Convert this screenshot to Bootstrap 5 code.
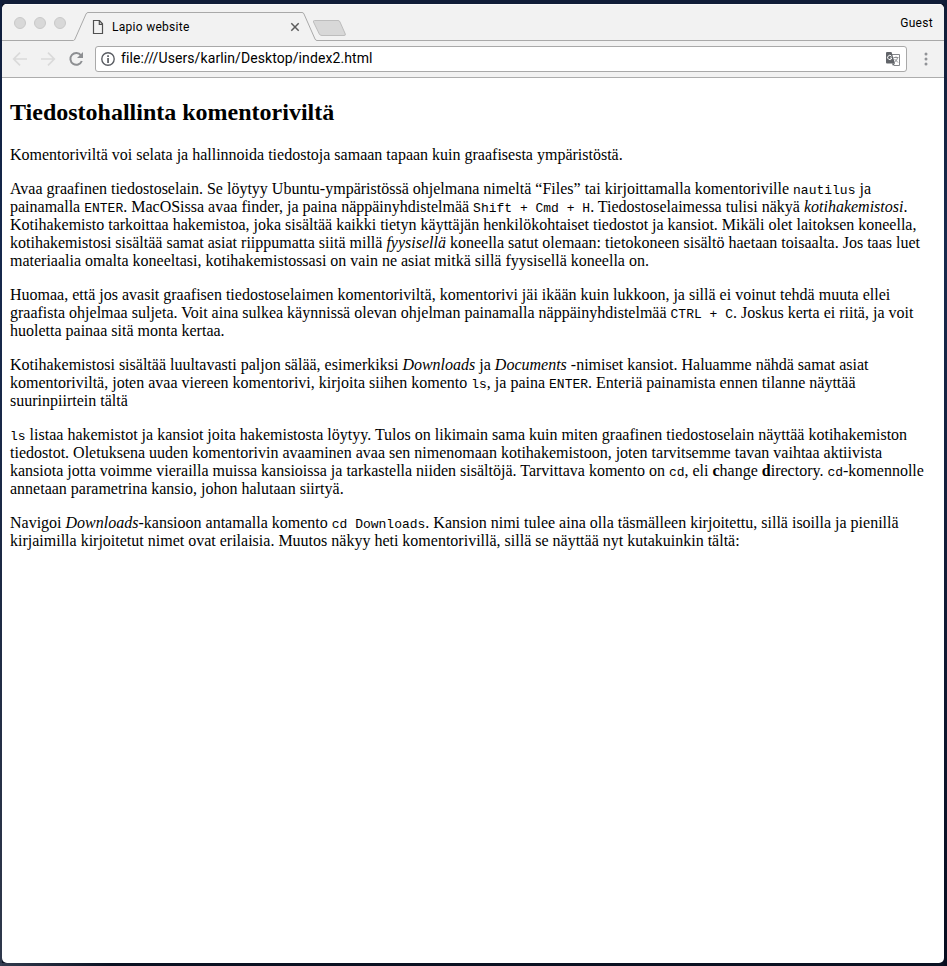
<!DOCTYPE html>
<html lang="fi">
<head>
<meta charset="utf-8">
<meta name="viewport" content="width=device-width, initial-scale=1">
<title>Lapio website</title>
<link href="https://cdn.jsdelivr.net/npm/bootstrap@5.3.0/dist/css/bootstrap.min.css" rel="stylesheet">
<style>
body{height:966px;padding:4px 3px 3px 2px;background:linear-gradient(90deg,rgba(54,63,82,.9),rgba(54,63,82,0) 110px) 0 963px/100% 3px no-repeat,linear-gradient(#0f1d3b,#15284c 25%,#1c2944 60%,#2b3448 90%,#2f394c) 0 0/2px 100% no-repeat,linear-gradient(#101c36,#182a4e 25%,#111b36 60%,#070d1f) 100% 0/3px 100% no-repeat,linear-gradient(#111d38,#111d38) 0 0/100% 4px no-repeat,#0a1122}
.browser{border-radius:5px;background:#fff}
.tabstrip{height:37px;background:#f2f2f2;box-shadow:inset 0 1px #fafafa}
.tabstrip>svg,.toolbar svg{display:block;flex:none}
.chrome-text{font-family:Roboto,"Liberation Sans",sans-serif;color:#000;line-height:16px;white-space:nowrap}
.tab-title{font-size:12px;left:110px;top:15px;letter-spacing:.28px}
.guest{font-size:12px;right:11px;top:11px;letter-spacing:.3px}
.toolbar{height:37px;background:#f2f2f2;border-bottom:1px solid #adadad;padding-left:10px}
.address{height:26px;border:1px solid #a9a9a9;border-radius:3px;margin-left:11px;padding:0 6px 0 5px}
.url{font-size:14px;letter-spacing:.09px;margin-left:6px;padding-bottom:2px}
.article{font-family:"Liberation Serif","Times New Roman",serif;font-size:16px;line-height:18px;color:#000;padding:21px 8px 0;white-space:nowrap}
.article h2{font-size:24px;line-height:27px;font-weight:700;margin:0 0 20px}
.article p{margin:0 0 16px}
.article code{font-family:"Liberation Mono","Courier New",monospace;font-size:13px;line-height:1;color:#000}
</style>
</head>
<body class="m-0 overflow-hidden">
<div class="browser h-100 overflow-hidden d-flex flex-column">
  <header class="tabstrip position-relative flex-shrink-0">
    <svg width="942" height="37" viewBox="0 0 942 37" fill="none">
      <g fill="#d8d8d8" stroke="#c9c9c9"><circle cx="18" cy="19" r="5.5"/><circle cx="38" cy="19" r="5.5"/><circle cx="58" cy="19" r="5.5"/></g>
      <path d="M0 36.5H71.5Q72.5 36.3 73 35L84 10Q84.800 8.500 86 8.500H300Q301.500 8.500 302 10L313 35Q313.700 36.500 315 36.500H942" stroke="#a9a9a9"/>
      <path d="M312.500 16.500H336Q337.500 16.500 338 18L343.300 30Q343.800 31.500 342 31.500H320Q318 31.500 317.300 30L311.500 18Q311 16.500 312.500 16.500Z" fill="#d8d8d8" stroke="#bdbdbd"/>
      <path d="M91.500 16.500H97.500L100.500 19.800V29.500H91.500ZM97.300 16.800V20.300H100.500" stroke="#505050" stroke-width="1.200"/>
      <path d="M289.300 19.300L296.700 26.700M296.700 19.300L289.300 26.700" stroke="#5c5c5c" stroke-width="1.500"/>
    </svg>
    <span class="chrome-text tab-title position-absolute">Lapio website</span>
    <span class="chrome-text guest position-absolute">Guest</span>
  </header>
  <nav class="toolbar d-flex align-items-center flex-shrink-0">
    <svg width="72" height="16" viewBox="0 0 72 16" fill="none">
      <g stroke="#dadada" stroke-width="1.700"><path d="M15 8H2M8 1.700L1.700 8L8 14.300M29 8H42M36 1.700L42.300 8L36 14.300"/></g>
      <path d="M69 4.300A5.900 5.900 0 1 0 69.800 10" stroke="#8d8f92" stroke-width="2"/>
      <path d="M71 1V7H65Z" fill="#8d8f92"/>
    </svg>
    <div class="address bg-white d-flex align-items-center flex-grow-1">
      <svg width="14" height="14" viewBox="0 0 14 14"><circle cx="7" cy="7" r="6.200" fill="none" stroke="#5a5d63" stroke-width="1.400"/><path d="M6.200 3.200h1.700v1.700H6.200zM6.200 6h1.700v5H6.200z" fill="#5a5d63"/></svg>
      <span class="chrome-text url">file:///Users/karlin/Desktop/index2.html</span>
      <svg class="ms-auto" width="14" height="14" viewBox="0 0 14 14">
        <path d="M5 2.500H13.500V13.500H8" fill="#fff" stroke="#85878b"/>
        <path d="M1 0H5.500L9 11.500H1Q0 11.500 0 10.500V1Q0 0 1 0Z" fill="#616469"/>
        <path d="M6 11.500H9L7 14Z" fill="#616469"/>
        <path d="M5.500 4.300A2.100 2.100 0 1 0 5.800 6H4" fill="none" stroke="#fff"/>
        <path d="M7.500 5.500H12.500M10 4.500V5.500M11.500 6Q11 8.500 8.500 10M8.500 7L12 10.500" fill="none" stroke="#85878b" stroke-width=".9"/>
      </svg>
    </div>
    <svg width="37" height="16" viewBox="0 0 37 16" fill="#919397"><circle cx="19" cy="3" r="1.500"/><circle cx="19" cy="8" r="1.500"/><circle cx="19" cy="13" r="1.500"/></svg>
  </nav>
  <main class="article flex-grow-1">
    <h2>Tiedostohallinta komentoriviltä</h2>
    <p>Komentoriviltä voi selata ja hallinnoida tiedostoja samaan tapaan kuin graafisesta ympäristöstä.</p>
    <p>Avaa graafinen tiedostoselain. Se löytyy Ubuntu-ympäristössä ohjelmana nimeltä “Files” tai kirjoittamalla komentoriville <code>nautilus</code> ja<br>
    painamalla <code>ENTER</code>. MacOSissa avaa finder, ja paina näppäinyhdistelmää <code>Shift + Cmd + H</code>. Tiedostoselaimessa tulisi näkyä <em>kotihakemistosi</em>.<br>
    Kotihakemisto tarkoittaa hakemistoa, joka sisältää kaikki tietyn käyttäjän henkilökohtaiset tiedostot ja kansiot. Mikäli olet laitoksen koneella,<br>
    kotihakemistosi sisältää samat asiat riippumatta siitä millä <em>fyysisellä</em> koneella satut olemaan: tietokoneen sisältö haetaan toisaalta. Jos taas luet<br>
    materiaalia omalta koneeltasi, kotihakemistossasi on vain ne asiat mitkä sillä fyysisellä koneella on.</p>
    <p>Huomaa, että jos avasit graafisen tiedostoselaimen komentoriviltä, komentorivi jäi ikään kuin lukkoon, ja sillä ei voinut tehdä muuta ellei<br>
    graafista ohjelmaa suljeta. Voit aina sulkea käynnissä olevan ohjelman painamalla näppäinyhdistelmää <code>CTRL + C</code>. Joskus kerta ei riitä, ja voit<br>
    huoletta painaa sitä monta kertaa.</p>
    <p>Kotihakemistosi sisältää luultavasti paljon sälää, esimerkiksi <em>Downloads</em> ja <em>Documents</em> -nimiset kansiot. Haluamme nähdä samat asiat<br>
    komentoriviltä, joten avaa viereen komentorivi, kirjoita siihen komento <code>ls</code>, ja paina <code>ENTER</code>. Enteriä painamista ennen tilanne näyttää<br>
    suurinpiirtein tältä</p>
    <p><code>ls</code> listaa hakemistot ja kansiot joita hakemistosta löytyy. Tulos on likimain sama kuin miten graafinen tiedostoselain näyttää kotihakemiston<br>
    tiedostot. Oletuksena uuden komentorivin avaaminen avaa sen nimenomaan kotihakemistoon, joten tarvitsemme tavan vaihtaa aktiivista<br>
    kansiota jotta voimme vierailla muissa kansioissa ja tarkastella niiden sisältöjä. Tarvittava komento on <code>cd</code>, eli <b>c</b>hange <b>d</b>irectory. <code>cd</code>-komennolle<br>
    annetaan parametrina kansio, johon halutaan siirtyä.</p>
    <p>Navigoi <em>Downloads</em>-kansioon antamalla komento <code>cd Downloads</code>. Kansion nimi tulee aina olla täsmälleen kirjoitettu, sillä isoilla ja pienillä<br>
    kirjaimilla kirjoitetut nimet ovat erilaisia. Muutos näkyy heti komentorivillä, sillä se näyttää nyt kutakuinkin tältä:</p>
  </main>
</div>
<script src="https://cdn.jsdelivr.net/npm/bootstrap@5.3.0/dist/js/bootstrap.bundle.min.js"></script>
</body>
</html>
